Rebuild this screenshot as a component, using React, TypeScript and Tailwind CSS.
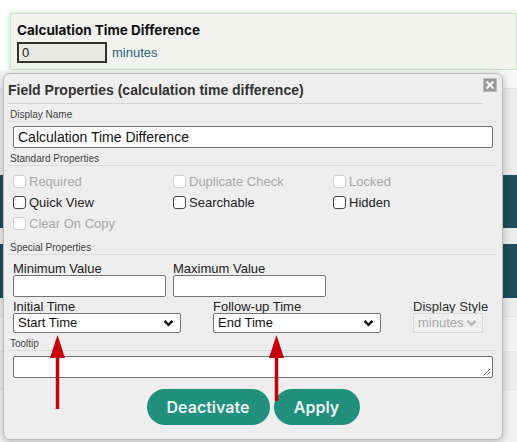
import React from "react";

const sans = "font-['Liberation_Sans',Arial,sans-serif]";

const Check = ({ label, disabled }: { label: string; disabled?: boolean }) => (
  <div className="flex items-center h-[21px] gap-[3px]">
    <span
      className={
        "w-[13px] h-[13px] rounded-[3px] border bg-white " +
        (disabled ? "border-[#cfcfcf] bg-[#f2f2f2]" : "border-[#444]")
      }
    />
    <span className={disabled ? "text-[#a9a9a9]" : "text-[#222]"}>{label}</span>
  </div>
);

const SectionHead = ({ children }: { children: React.ReactNode }) => (
  <div className="text-[10px] leading-[12px] text-[#444] border-b border-[#dcdcdc] pl-[2px] mr-[2px]">
    {children}
  </div>
);

const Chevron = ({ color }: { color: string }) => (
  <svg width="11" height="8" viewBox="0 0 11 8">
    <path d="M1.5 1.8 L5.5 5.8 L9.5 1.8" fill="none" stroke={color} strokeWidth="2.4" />
  </svg>
);

const Select = ({ value, width }: { value: string; width: string }) => (
  <div
    className={
      "h-[20px] bg-white border border-[#767676] rounded-[2px] flex items-center justify-between pl-[4px] pr-[6px] text-[#111] " +
      width
    }
  >
    <span>{value}</span>
    <Chevron color="#111" />
  </div>
);

export default function App() {
  return (
    <div className={"relative w-[517px] h-[442px] overflow-hidden bg-white " + sans}>
      {/* page behind the dialog */}
      <div className="flex flex-col">
        <div className="h-[13px]" />
        <div className="ml-[10px] h-[57px] bg-[#f2f2f0] border border-[#cfe6c6] shadow-[0_0_6px_#bfe0b4] pl-[6px] pt-[8px]">
          <div className="font-['Inter',sans-serif] font-bold text-[13.5px] leading-[16px] text-[#111]">
            Calculation Time Difference
          </div>
          <div className="flex items-center gap-[5px] mt-[4px]">
            <div className="w-[90px] h-[21px] border-2 border-[#333] bg-[#e9e9e6] text-[13px] leading-[17px] pl-[3px] text-[#222]">
              0
            </div>
            <span className="text-[13px] text-[#2a6477]">minutes</span>
          </div>
        </div>
        <div className="h-[18px] bg-[#f6f6f6]" />
        <div className="h-[87px] bg-[#ececec] border-t border-[#e2e2e2]" />
        <div className="h-[53px] bg-[#1e4e5b]" />
        <div className="h-[16px] bg-[#ececec]" />
        <div className="h-[54px] bg-[#1e4e5b]" />
        <div className="h-[18px] bg-[#ececec]" />
        <div className="h-[35px] bg-[#f3f3f3] border-t border-[#e4e4e4]" />
        <div className="h-[38px] bg-[#ececec] border-t border-[#e4e4e4]" />
        <div className="h-[54px] bg-[#f3f3f3] border-t border-[#e4e4e4]" />
      </div>

      {/* dialog */}
      <div className="absolute left-[3px] top-[73px] w-[500px] h-[367px] rounded-[7px] border border-[#bdbdbd] bg-[#eeeeee] shadow-[0_2px_8px_rgba(0,0,0,0.25)] px-[4px] text-[13px] leading-[16px]">
        <div className="absolute right-[5px] top-[4px] w-[14px] h-[14px] bg-[#9a9a9a] border border-[#bbb] flex items-center justify-center">
          <svg width="10" height="10" viewBox="0 0 10 10">
            <path d="M1.5 1.5 L8.5 8.5 M8.5 1.5 L1.5 8.5" stroke="#fff" strokeWidth="2" />
          </svg>
        </div>

        <div className="pt-[8px] pb-[5px] mr-[15px] border-b border-[#d4d4d4] font-bold text-[14px] leading-[16px] text-[#333]">
          Field Properties (calculation time difference)
        </div>

        <div className="mt-[5px]">
          <SectionHead>Display Name</SectionHead>
        </div>
        <div className="ml-[5px] mr-[5px] mt-[4px] h-[22px] bg-white border border-[#767676] rounded-[2px] pl-[4px] flex items-center text-[14px] text-[#111]">
          Calculation Time Difference
        </div>

        <div className="mt-[5px]">
          <SectionHead>Standard Properties</SectionHead>
        </div>
        <div className="ml-[5px] mt-[5px] grid grid-cols-[160px_160px_160px]">
          <Check label="Required" disabled />
          <Check label="Duplicate Check" disabled />
          <Check label="Locked" disabled />
          <Check label="Quick View" />
          <Check label="Searchable" />
          <Check label="Hidden" />
          <Check label="Clear On Copy" disabled />
        </div>

        <div className="mt-[8px]">
          <SectionHead>Special Properties</SectionHead>
        </div>
        <div className="ml-[5px] mt-[7px] flex gap-[7px] text-[#222]">
          <div className="flex flex-col w-[153px]">
            <span className="leading-[13px]">Minimum Value</span>
            <div className="h-[22px] bg-white border border-[#767676] rounded-[2px]" />
          </div>
          <div className="flex flex-col w-[153px]">
            <span className="leading-[13px]">Maximum Value</span>
            <div className="h-[22px] bg-white border border-[#767676] rounded-[2px]" />
          </div>
        </div>

        <div className="ml-[5px] mt-[4px] flex text-[#222]">
          <div className="flex flex-col w-[200px]">
            <span className="leading-[12px]">Initial Time</span>
            <Select value="Start Time" width="w-[168px]" />
          </div>
          <div className="flex flex-col w-[200px]">
            <span className="leading-[12px]">Follow-up Time</span>
            <Select value="End Time" width="w-[168px]" />
          </div>
          <div className="flex flex-col">
            <span className="leading-[12px] text-[#333]">Display Style</span>
            <div className="w-[70px] h-[20px] bg-[#f0f0f0] border border-[#d8d8d8] flex items-center justify-between pl-[4px] pr-[5px] text-[#aaa]">
              <span>minutes</span>
              <Chevron color="#b5b5b5" />
            </div>
          </div>
        </div>

        <div className="mt-[5px]">
          <SectionHead>Tooltip</SectionHead>
        </div>
        <div className="relative ml-[5px] mr-[5px] mt-[5px] h-[22px] bg-white border border-[#767676] rounded-[2px]">
          <svg className="absolute right-[1px] bottom-[1px]" width="8" height="8" viewBox="0 0 8 8">
            <path d="M1 7 L7 1 M4 7 L7 4" stroke="#777" strokeWidth="1" />
          </svg>
        </div>

        <div className="mt-[11px] flex justify-center gap-[4px] font-['Inter',sans-serif] font-semibold text-[16px] text-[#e9f5f2]">
          <button className="w-[123px] h-[36px] rounded-full bg-[#21907d]">Deactivate</button>
          <button className="w-[86px] h-[36px] rounded-full bg-[#21907d]">Apply</button>
        </div>
      </div>

      {/* red annotation arrows */}
      <svg className="absolute left-0 top-0 pointer-events-none" width="517" height="442" viewBox="0 0 517 442">
        <path d="M57.5 356 L57.5 409" stroke="#c8000b" strokeWidth="3.5" />
        <path d="M57.5 335 L50 358 L65 358 Z" fill="#c8000b" />
        <path d="M276.5 356 L276.5 401" stroke="#c8000b" strokeWidth="3.5" />
        <path d="M276.5 335 L269 358 L284 358 Z" fill="#c8000b" />
      </svg>
    </div>
  );
}
